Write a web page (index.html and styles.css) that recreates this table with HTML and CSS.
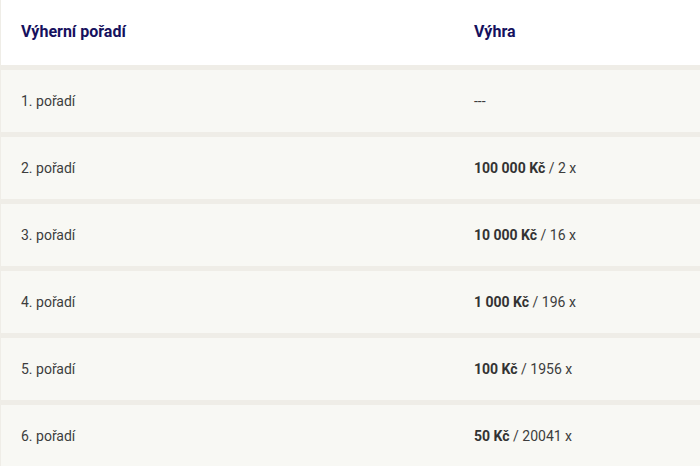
FILE: index.html
```html
<!DOCTYPE html>
<html lang="cs">
<head>
<meta charset="utf-8">
<title>Výherní pořadí</title>
<link rel="stylesheet" href="styles.css">
</head>
<body>
<div class="table">
  <div class="row head">
    <div class="cell">Výherní pořadí</div>
    <div class="cell">Výhra</div>
  </div>
  <div class="row">
    <div class="cell">1. pořadí</div>
    <div class="cell">---</div>
  </div>
  <div class="row">
    <div class="cell">2. pořadí</div>
    <div class="cell"><b>100 000 Kč</b> / 2 x</div>
  </div>
  <div class="row">
    <div class="cell">3. pořadí</div>
    <div class="cell"><b>10 000 Kč</b> / 16 x</div>
  </div>
  <div class="row">
    <div class="cell">4. pořadí</div>
    <div class="cell"><b>1 000 Kč</b> / 196 x</div>
  </div>
  <div class="row">
    <div class="cell">5. pořadí</div>
    <div class="cell"><b>100 Kč</b> / 1956 x</div>
  </div>
  <div class="row">
    <div class="cell">6. pořadí</div>
    <div class="cell"><b>50 Kč</b> / 20041 x</div>
  </div>
</div>
</body>
</html>
```
FILE: styles.css
```css
html, body {
  margin: 0;
  padding: 0;
  background: #ffffff;
}
body {
  font-family: Roboto, "Liberation Sans", sans-serif;
  font-size: 14px;
  color: #3d3d3d;
}
.table {
  display: flex;
  flex-direction: column;
  gap: 5px;
  background: #efede7;
  border-left: 1px solid #efede7;
}
.row {
  display: grid;
  grid-template-columns: 453px 1fr;
  height: 62px;
  align-items: center;
  background: #f8f8f4;
}
.row.head {
  height: 65px;
  background: #ffffff;
  color: #16115e;
  font-weight: 700;
  font-size: 16px;
}
.row.head .cell {
  padding-bottom: 2px;
}
.cell {
  padding-left: 20px;
  letter-spacing: 0;
}
.cell b {
  color: #333333;
  font-weight: 700;
}
```
